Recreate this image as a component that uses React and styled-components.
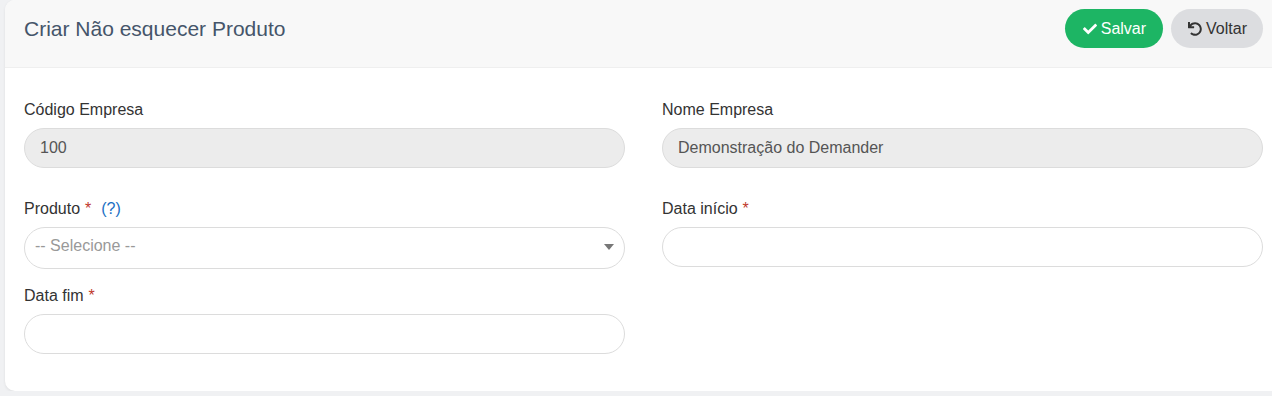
import React from "react";
import styled, { createGlobalStyle } from "styled-components";
import { FaCheck, FaUndo } from "react-icons/fa";

const Global = createGlobalStyle`
  html, body { margin: 0; padding: 0; overflow: hidden; background: #f0f1f3; }
  body { font-family: "Liberation Sans", Arial, sans-serif; }
  * { box-sizing: border-box; }
`;

const Page = styled.div`
  padding: 0 0 0 5px;
  width: 1290px;
`;

const Card = styled.div`
  width: 1278px;
  background: #fff;
  border-radius: 10px;
  box-shadow: 0 1px 3px rgba(0, 0, 0, 0.08);
  overflow: hidden;
`;

const Header = styled.div`
  height: 68px;
  background: #f8f8f8;
  border-bottom: 1px solid #efefef;
  display: flex;
  align-items: center;
  justify-content: space-between;
  padding: 0 20px 10px 19px;
`;

const Title = styled.h1`
  margin: 0;
  font-size: 21px;
  font-weight: 400;
  color: #45556a;
`;

const Actions = styled.div`
  display: flex;
  gap: 8px;
`;

const Button = styled.button`
  height: 39px;
  border: none;
  border-radius: 20px;
  padding: 0 ${(p) => (p.$primary ? 17 : 16)}px 0 ${(p) => (p.$primary ? 18 : 17)}px;
  display: flex;
  align-items: center;
  gap: 4px;
  font-family: inherit;
  font-size: 16px;
  cursor: pointer;
  background: ${(p) => (p.$primary ? "#1db564" : "#dcdde0")};
  color: ${(p) => (p.$primary ? "#fff" : "#333")};
  svg { font-size: 14px; }
`;

const Body = styled.div`
  padding: 32px 20px 37px 19px;
`;

const Row = styled.div`
  display: grid;
  grid-template-columns: 601px 601px;
  column-gap: 37px;
  align-items: start;
  margin-top: ${(p) => p.$top || 0}px;
`;

const Group = styled.div`
  display: flex;
  flex-direction: column;
`;

const Label = styled.label`
  font-size: 16px;
  line-height: 20px;
  color: #333;
  margin-bottom: 8px;
`;

const Req = styled.span`
  color: #c0392b;
  margin-left: 5px;
`;

const Help = styled.span`
  color: #1a6fc4;
  margin-left: 10px;
`;

const Input = styled.div`
  height: ${(p) => p.$h || 40}px;
  border: 1px solid #dcdcdc;
  border-radius: 21px;
  background: ${(p) => (p.$disabled ? "#ececec" : "#fff")};
  color: #555;
  font-size: 16px;
  display: flex;
  align-items: center;
  padding: 0 15px;
`;

const SelectBox = styled(Input)`
  padding: 0 10px 4px 10px;
  justify-content: space-between;
  color: #999;
`;

const Caret = styled.span`
  width: 0;
  height: 0;
  border-left: 5px solid transparent;
  border-right: 5px solid transparent;
  border-top: 6px solid #777;
  margin-top: 2px;
`;

export default function App() {
  return (
    <>
      <Global />
      <Page>
        <Card>
          <Header>
            <Title>Criar Não esquecer Produto</Title>
            <Actions>
              <Button $primary>
                <FaCheck /> Salvar
              </Button>
              <Button>
                <FaUndo /> Voltar
              </Button>
            </Actions>
          </Header>
          <Body>
            <Row>
              <Group>
                <Label>Código Empresa</Label>
                <Input $disabled>100</Input>
              </Group>
              <Group>
                <Label>Nome Empresa</Label>
                <Input $disabled>Demonstração do Demander</Input>
              </Group>
            </Row>
            <Row $top={31}>
              <Group>
                <Label>
                  Produto<Req>*</Req>
                  <Help>(?)</Help>
                </Label>
                <SelectBox $h={42}>
                  -- Selecione --
                  <Caret />
                </SelectBox>
              </Group>
              <Group>
                <Label>
                  Data início<Req>*</Req>
                </Label>
                <Input />
              </Group>
            </Row>
            <Row $top={17}>
              <Group>
                <Label>
                  Data fim<Req>*</Req>
                </Label>
                <Input />
              </Group>
            </Row>
          </Body>
        </Card>
      </Page>
    </>
  );
}
